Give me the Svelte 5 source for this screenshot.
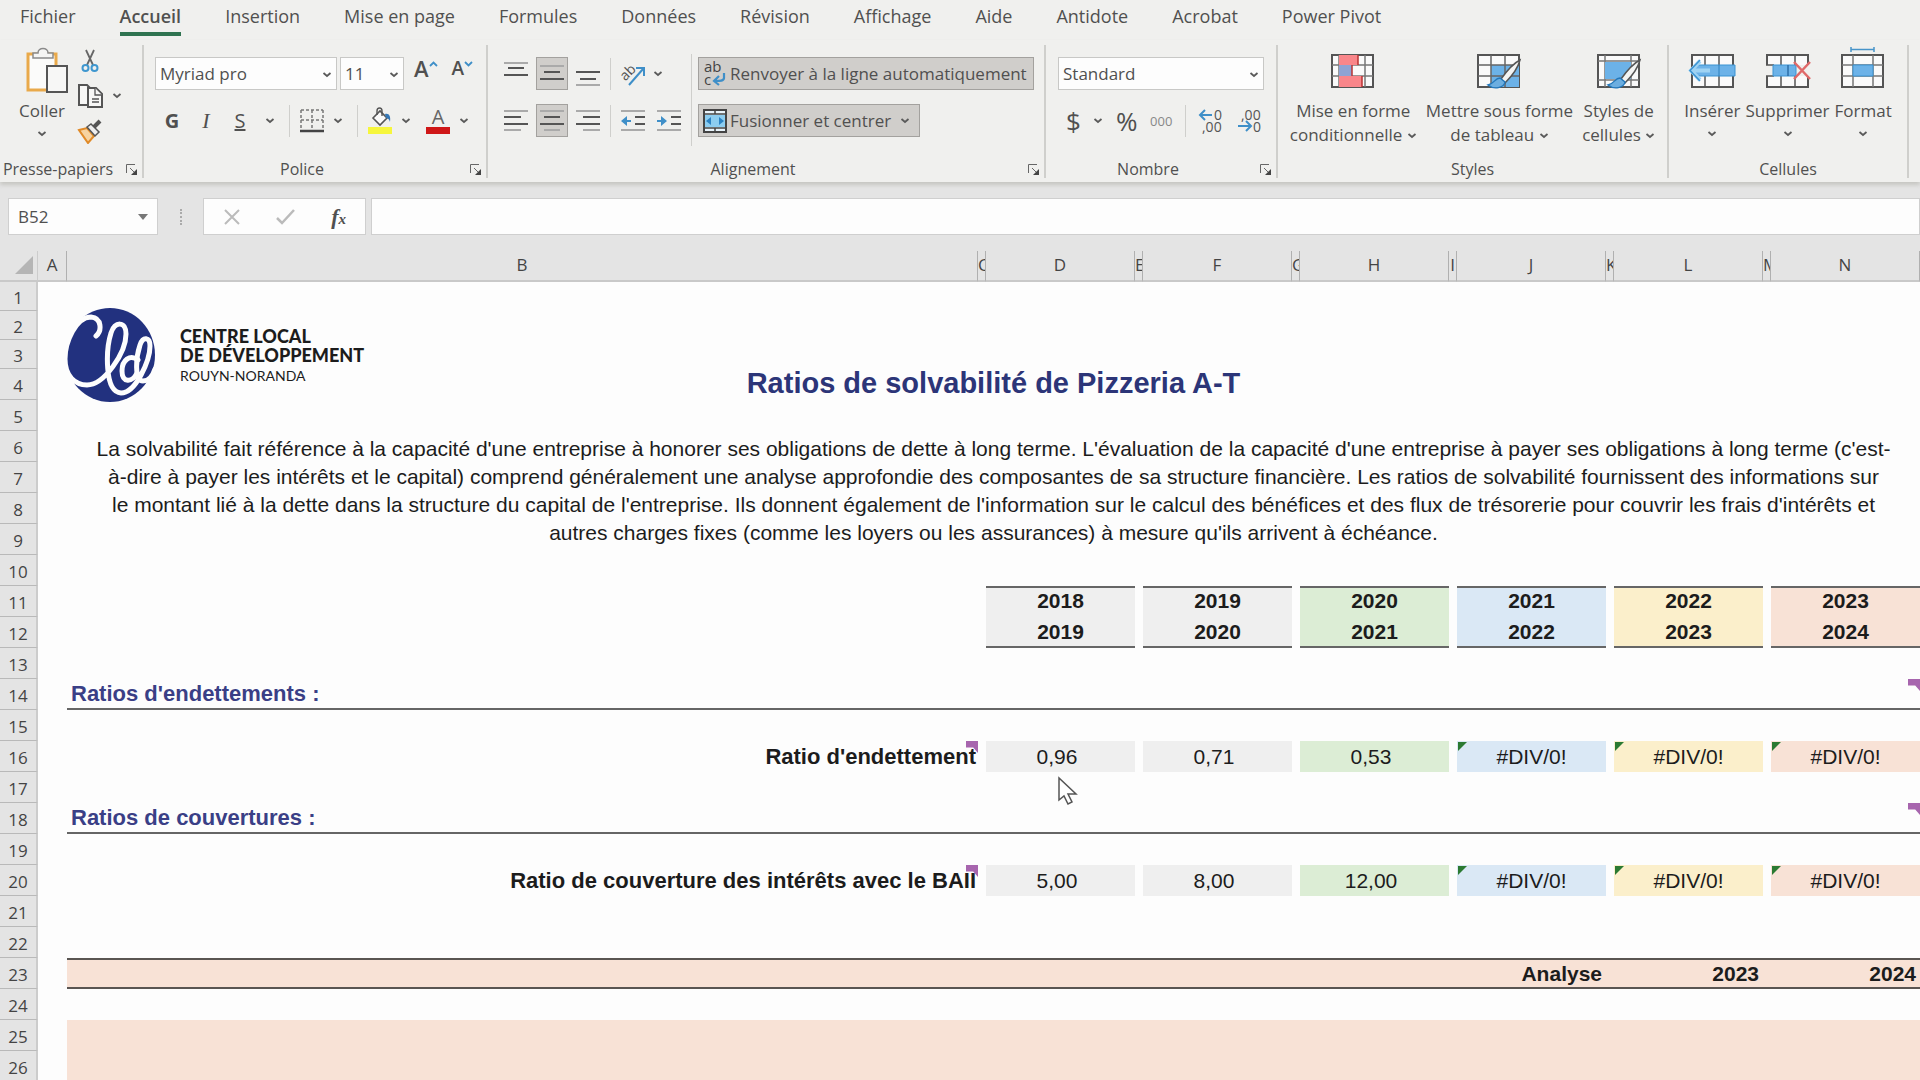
<script lang="ts">

    const tabs = ["Fichier", "Accueil", "Insertion", "Mise en page", "Formules", "Données", "Révision", "Affichage", "Aide", "Antidote", "Acrobat", "Power Pivot"];
    let activeTab = "Accueil";

    const letters = ["A", "B", "C", "D", "E", "F", "G", "H", "I", "J", "K", "L", "M", "N"];

    const years = [
        { from: 2018, to: 2019, tone: "grey", debt: "0,96", cover: "5,00" },
        { from: 2019, to: 2020, tone: "grey", debt: "0,71", cover: "8,00" },
        { from: 2020, to: 2021, tone: "green", debt: "0,53", cover: "12,00" },
        { from: 2021, to: 2022, tone: "blue", debt: "#DIV/0!", cover: "#DIV/0!" },
        { from: 2022, to: 2023, tone: "yellow", debt: "#DIV/0!", cover: "#DIV/0!" },
        { from: 2023, to: 2024, tone: "peach", debt: "#DIV/0!", cover: "#DIV/0!" },
    ];

    let cellName = "B52";
    let formula = "";
</script>

{#snippet chevron()}
    <svg class="chevron" width="10" height="6" viewBox="0 0 10 6"><path d="M1.500 1L5 4l3.500-3" fill="none" stroke="#5a5a5a" stroke-width="1.8"/></svg>
{/snippet}

{#snippet launcher(name)}
    <button class="launcher" aria-label={name}>
        <svg width="13" height="13" viewBox="0 0 13 13" fill="none" stroke="#666"><path d="M1.5 10V1.5H10M5 5l6 6"/><path d="M12 6v6H6z" fill="#444" stroke="none"/></svg>
    </button>
{/snippet}

{#snippet bars(lines)}
    <svg width="24" height="24" viewBox="0 0 24 24">
        {#each lines as l}
            <rect x={l[0]} y={l[1]} width={l[2]} height="2" fill={l[3] ? "#aaa" : "#555"}/>
        {/each}
    </svg>
{/snippet}

{#snippet brush()}
    <path d="M44 13c-6 3-14 12-19 19l4 4c6-6 13-15 15-23z" fill="#f4f4f3" stroke="#555" stroke-width="1.5"/>
    <path d="M24 31c-5 0-6 6-12 7 6 5 16 3 17-3z" fill="#6caee0" stroke="#2277bb" stroke-width="1.4"/>
{/snippet}

{#snippet ratioRow(num, label, key)}
    <tr>
        <th>{num}</th>
        <td></td>
        <td class="label noted">{label}</td>
        {#each years as y}
            <td></td>
            <td class="value {y.tone}" class:error={y[key].startsWith("#")}>{y[key]}</td>
        {/each}
    </tr>
{/snippet}

{#snippet emptyRow(num)}
    <tr><th>{num}</th><td colspan="14"></td></tr>
{/snippet}

<main>
    <nav class="tabs">
        {#each tabs as tab}
            <button class="tab" class:active={tab === activeTab} on:click={() => activeTab = tab}>{tab}</button>
        {/each}
    </nav>

    <div class="ribbon">
        <section class="group clipboard">
            <div class="body">
                <button class="big">
                    <svg width="44" height="48" viewBox="0 0 44 48">
                        <path d="M3 7h28v36H3z" fill="#fbfbfa" stroke="#e9a94a" stroke-width="3"/>
                        <path d="M8 11V6h5c0-6 10-6 10 0h5v5z" fill="#f5f5f4" stroke="#8a8a8a" stroke-width="1.5"/>
                        <path d="M22 19h20v26H22z" fill="#f7f7f6" stroke="#555" stroke-width="2"/>
                    </svg>
                    <span>Coller</span>
                    {@render chevron()}
                </button>
                <div class="stack">
                    <button aria-label="Couper">
                        <svg width="18" height="24" viewBox="0 0 18 24" fill="none"><path d="M5 1l7 15M13 1L6 16" stroke="#666" stroke-width="1.8"/><circle cx="4.5" cy="19" r="3" stroke="#3f97cf" stroke-width="2"/><circle cx="13.500" cy="19" r="3" stroke="#3f97cf" stroke-width="2"/></svg>
                    </button>
                    <button class="wide" aria-label="Copier">
                        <svg width="27" height="26" viewBox="0 0 27 26" fill="#f7f7f6" stroke="#555" stroke-width="2"><path d="M10 22H2V2h8l3 3"/><path d="M11 5h8l6 6v13H11z"/><path d="M18 5v7h7M15 16h7M15 19h7" stroke-width="1.300"/></svg>
                        {@render chevron()}
                    </button>
                    <button aria-label="Reproduire la mise en forme">
                        <svg width="26" height="25" viewBox="0 0 26 25"><path d="M2 11l8-2 7 8-6 7z" fill="#f7d3a0" stroke="#e08a28" stroke-width="2"/><path d="M10 8l4-3 8 8-4 4z" fill="#eee" stroke="#555" stroke-width="1.500"/><path d="M17 8l6-6" stroke="#555" stroke-width="4"/></svg>
                    </button>
                </div>
            </div>
            <footer class="launch">Presse-papiers {@render launcher("Presse-papiers")}</footer>
        </section>

        <section class="group font">
            <div class="body rows">
                <div class="line">
                    <div class="pick family"><select aria-label="Police"><option>Myriad pro</option></select>{@render chevron()}</div>
                    <div class="pick size"><select aria-label="Taille de police"><option>11</option></select>{@render chevron()}</div>
                    <button class="tool grow" aria-label="Augmenter la taille"><b class="letter">A</b><svg width="9" height="6" viewBox="0 0 9 6"><path d="M1 5l3.500-3.500L8 5" fill="none" stroke="#3f8fc8" stroke-width="1.800"/></svg></button>
                    <button class="tool shrink" aria-label="Réduire la taille"><b class="letter">A</b><svg width="9" height="6" viewBox="0 0 9 6"><path d="M1 1l3.500 3.500L8 1" fill="none" stroke="#3f8fc8" stroke-width="1.800"/></svg></button>
                </div>
                <div class="line font-tools">
                    <button class="tool glyph bold">G</button>
                    <button class="tool glyph italic">I</button>
                    <button class="tool glyph under">S</button>
                    <button class="drop" aria-label="Soulignement">{@render chevron()}</button>
                    <i class="bar"></i>
                    <button class="tool" aria-label="Bordures">
                        <svg width="26" height="26" viewBox="0 0 26 26" fill="none" stroke="#777" stroke-width="1.500"><path d="M2 2h22M2 2v20M24 2v20M13 2v20M2 12h22" stroke-dasharray="3 2"/><path d="M1 23h24" stroke="#444" stroke-width="2.500"/></svg>
                    </button>
                    <button class="drop" aria-label="Choix des bordures">{@render chevron()}</button>
                    <i class="bar"></i>
                    <button class="tool" aria-label="Couleur de remplissage">
                        <svg width="26" height="28" viewBox="0 0 26 28"><path d="M6 11l7-7 7 7-7 7z" fill="#fafafa" stroke="#555" stroke-width="1.600"/><path d="M10 8V4c0-4 5-4 5 0v5" fill="none" stroke="#555" stroke-width="1.400"/><path d="M18 7c4-1 6 2 5 8-1-3-2-4-4-4z" fill="#3577b5"/><path d="M1 20h24v7H1z" fill="#f6f63c"/></svg>
                    </button>
                    <button class="drop" aria-label="Choix du remplissage">{@render chevron()}</button>
                    <button class="tool" aria-label="Couleur de police">
                        <svg width="26" height="28" viewBox="0 0 26 28"><text x="13" y="17" text-anchor="middle" font-size="20" fill="#666">A</text><path d="M1 20h24v7H1z" fill="#cf1717"/></svg>
                    </button>
                    <button class="drop" aria-label="Choix de la couleur">{@render chevron()}</button>
                </div>
            </div>
            <footer class="launch">Police {@render launcher("Police")}</footer>
        </section>

        <section class="group align">
            <div class="body">
                <div class="rows">
                    <div class="line">
                        <button class="tool" aria-label="Aligner en haut">{@render bars([[0, 0, 24, 1], [4, 5, 16, 0], [0, 12, 24, 0]])}</button>
                        <button class="tool on" aria-label="Aligner au centre">{@render bars([[0, 3, 24, 1], [4, 9, 16, 0], [0, 16, 24, 0]])}</button>
                        <button class="tool" aria-label="Aligner en bas">{@render bars([[0, 9, 24, 0], [4, 16, 16, 0], [0, 22, 24, 1]])}</button>
                        <i class="bar"></i>
                        <button class="tool" aria-label="Orientation">
                            <svg width="26" height="26" viewBox="0 0 26 26"><text x="0" y="16" font-size="14" fill="#555" transform="rotate(-45 8 12)">ab</text><path d="M9 24L23 8M16 7h8v8" fill="none" stroke="#3f8fc8" stroke-width="2"/></svg>
                        </button>
                        <button class="drop" aria-label="Choix de l'orientation">{@render chevron()}</button>
                    </div>
                    <div class="line">
                        <button class="tool" aria-label="Aligner à gauche">{@render bars([[0, 1, 24, 1], [0, 7, 17, 0], [0, 14, 24, 0], [0, 20, 17, 1]])}</button>
                        <button class="tool on" aria-label="Centrer">{@render bars([[0, 1, 24, 1], [4, 7, 16, 0], [0, 14, 24, 0], [4, 20, 16, 1]])}</button>
                        <button class="tool" aria-label="Aligner à droite">{@render bars([[0, 1, 24, 1], [7, 7, 17, 0], [0, 14, 24, 0], [7, 20, 17, 1]])}</button>
                        <i class="bar"></i>
                        <button class="tool" aria-label="Diminuer le retrait">
                            <svg width="24" height="24" viewBox="0 0 24 24"><path d="M0 2h24M0 21h24" stroke="#aaa" stroke-width="2"/><path d="M14 8h10M14 15h10" stroke="#555" stroke-width="2"/><path d="M0 12l6-5v10zM6 11h4v2H6z" fill="#3f8fc8"/></svg>
                        </button>
                        <button class="tool indent" aria-label="Augmenter le retrait">
                            <svg width="24" height="24" viewBox="0 0 24 24"><path d="M0 2h24M0 21h24" stroke="#aaa" stroke-width="2"/><path d="M14 8h10M14 15h10" stroke="#555" stroke-width="2"/><path d="M10 12L4 7v10zM0 11h4v2H0z" fill="#3f8fc8"/></svg>
                        </button>
                    </div>
                </div>
                <i class="bar tall"></i>
                <div class="rows">
                    <button class="toggle wrap">
                        <svg width="24" height="28" viewBox="0 0 24 28"><text x="1" y="12" font-size="15" fill="#444">ab</text><text x="1" y="25" font-size="15" fill="#444">c</text><path d="M21 13v5c0 3-4 3-9 3M16 16l-5 5 5 4" fill="none" stroke="#3f8fc8" stroke-width="2.200"/></svg>
                        Renvoyer à la ligne automatiquement
                    </button>
                    <button class="toggle merge">
                        <svg width="24" height="24" viewBox="0 0 24 24"><path d="M1 1h22v22H1z" fill="#e9f4fb" stroke="#444" stroke-width="2"/><path d="M2 6h20v12H2z" fill="#8ccdf0"/><path d="M1 5h22M1 19h22M12 1v4M12 19v4" stroke="#444" stroke-width="1.500"/><path d="M3 12l5-4v8zM21 12l-5-4v8z" fill="#2b83c4"/></svg>
                        Fusionner et centrer
                        {@render chevron()}
                    </button>
                </div>
            </div>
            <footer class="launch">Alignement {@render launcher("Alignement")}</footer>
        </section>

        <section class="group number">
            <div class="body rows">
                <div class="pick format"><select aria-label="Format de nombre"><option>Standard</option></select>{@render chevron()}</div>
                <div class="line number-tools">
                    <button class="tool symbol">$</button>
                    <button class="drop" aria-label="Format monétaire">{@render chevron()}</button>
                    <button class="tool symbol">%</button>
                    <button class="tool zeros">000</button>
                    <i class="bar"></i>
                    <button class="tool" aria-label="Ajouter une décimale">
                        <svg width="26" height="26" viewBox="0 0 26 26" font-size="14" fill="#555"><text x="16" y="12">0</text><text x="4" y="24">,00</text><path d="M14 7H2M7 2L2 7l5 5" fill="none" stroke="#3f8fc8" stroke-width="2"/></svg>
                    </button>
                    <button class="tool" aria-label="Réduire les décimales">
                        <svg width="26" height="26" viewBox="0 0 26 26" font-size="14" fill="#555"><text x="4" y="12">,00</text><text x="16" y="24">0</text><path d="M1 18h13M9 13l5 5-5 5" fill="none" stroke="#3f8fc8" stroke-width="2"/></svg>
                    </button>
                </div>
            </div>
            <footer class="launch">Nombre {@render launcher("Nombre")}</footer>
        </section>

        <section class="group styles">
            <div class="body">
                <button class="big">
                    <svg width="46" height="48" viewBox="0 0 46 48"><path d="M2 8h41v32H2z" fill="#fafafa" stroke="#555" stroke-width="2"/><path d="M2 18h41M2 29h41M9 8v32M35 8v32" stroke="#777" stroke-width="1.500"/><path d="M9 8h19v10H9zM9 29h23v11H9z" fill="#f9868a"/><path d="M9 18h13v11H9z" fill="#8fa3d3"/><path d="M28 8v10M22 18v11M32 29v11" stroke="#b33" stroke-width="1.500"/></svg>
                    <span>Mise en forme<br>conditionnelle {@render chevron()}</span>
                </button>
                <button class="big">
                    <svg width="46" height="48" viewBox="0 0 46 48"><path d="M2 8h41v32H2z" fill="#fafafa" stroke="#555" stroke-width="2"/><path d="M15 18h28v22H15z" fill="#6cb2e8"/><path d="M2 18h41M2 29h41M15 8v32M29 8v32" stroke="#666" stroke-width="1.500"/>{@render brush()}</svg>
                    <span>Mettre sous forme<br>de tableau {@render chevron()}</span>
                </button>
                <button class="big">
                    <svg width="46" height="48" viewBox="0 0 46 48"><path d="M2 8h41v32H2z" fill="#fafafa" stroke="#555" stroke-width="2"/><path d="M2 14h41M2 33h41M9 8v32M35 8v32" stroke="#777" stroke-width="1.500"/><path d="M9 15h26v17H9z" fill="#6cb2e8"/>{@render brush()}</svg>
                    <span>Styles de<br>cellules {@render chevron()}</span>
                </button>
            </div>
            <footer>Styles</footer>
        </section>

        <section class="group cells">
            <div class="body">
                <button class="big">
                    <svg width="50" height="48" viewBox="0 0 50 48"><path d="M5 8h41v32H5z" fill="#fafafa" stroke="#555" stroke-width="2"/><path d="M18 8v32M32 8v32" stroke="#555" stroke-width="1.500"/><path d="M8 18h40v11H8z" fill="#6cb2e8" stroke="#3b93d2"/><path d="M32 18v11" stroke="#2d80be"/><path d="M13 14L4 23.500l9 9.500M4 23.500h19" fill="none" stroke="#9fd3f3" stroke-width="4"/><path d="M13 13L3 23.500l10 10.500" fill="none" stroke="#3b93d2" stroke-width="1.500"/></svg>
                    <span>Insérer</span>
                    {@render chevron()}
                </button>
                <button class="big">
                    <svg width="50" height="48" viewBox="0 0 50 48"><path d="M4 8h41v32H4z" fill="#fafafa" stroke="#555" stroke-width="2"/><path d="M18 8v32M32 8v32" stroke="#555" stroke-width="1.500"/><path d="M2 18h46v11H2z" fill="#f0f0ee"/><path d="M3 18h8M3 29h8" stroke="#555" stroke-width="1.500"/><path d="M10 18h23v11H10z" fill="#6cb2e8" stroke="#3b93d2"/><path d="M25 18v11" stroke="#2d6ea8" stroke-width="1.500"/><path d="M31 15l16 17M47 15L31 32" stroke="#e06a6a" stroke-width="2.500"/></svg>
                    <span>Supprimer</span>
                    {@render chevron()}
                </button>
                <button class="big">
                    <svg width="46" height="48" viewBox="0 0 46 48"><path d="M2 8h41v32H2z" fill="#fafafa" stroke="#555" stroke-width="2"/><path d="M2 18h41M2 29h41M13 8v32M33 8v32" stroke="#777" stroke-width="1.500"/><path d="M13 18h20v11H13z" fill="#6cb2e8" stroke="#3b93d2"/><path d="M11 0v5M34 0v5M11 2.500h23" stroke="#4794c9" stroke-width="1.500"/></svg>
                    <span>Format</span>
                    {@render chevron()}
                </button>
            </div>
            <footer>Cellules</footer>
        </section>
    </div>

    <div class="formula-bar">
        <div class="name-box">
            <input type="text" aria-label="Zone Nom" bind:value={cellName}>
            <svg width="10" height="6" viewBox="0 0 10 6"><path d="M0 0h10L5 6z" fill="#777"/></svg>
        </div>
        <span class="grip"></span>
        <div class="entry">
            <button aria-label="Annuler"><svg width="18" height="16" viewBox="0 0 18 16"><path d="M2 1l14 14M16 1L2 15" stroke="#bbb" stroke-width="2"/></svg></button>
            <button aria-label="Entrer"><svg width="20" height="16" viewBox="0 0 20 16"><path d="M1 9l5 5L18 1" fill="none" stroke="#bbb" stroke-width="2.500"/></svg></button>
            <button class="fx" aria-label="Insérer une fonction">f<small>x</small></button>
        </div>
        <input class="formula" type="text" aria-label="Barre de formule" bind:value={formula}>
    </div>

    <div class="sheet">
        <table>
            <colgroup>
                <col class="c-num"><col class="c-a"><col>
                {#each years as y}
                    <col class="c-gap"><col class="c-year">
                {/each}
            </colgroup>
            <thead>
                <tr>
                    <th class="corner"><svg width="18" height="18" viewBox="0 0 18 18"><path d="M18 0v18H0z" fill="#b5b5b5"/></svg></th>
                    {#each letters as letter}
                        <th>{letter}</th>
                    {/each}
                </tr>
            </thead>
            <tbody>
                <tr class="short"><th>1</th><td></td><td class="logo-cell" colspan="13">
                    <div class="logo">
                        <svg width="92" height="96" viewBox="-1 -1 92 96">
                            <ellipse cx="45" cy="47" rx="45" ry="47" fill="#22317f"/>
                            <g fill="none" stroke="#fdfdfd" stroke-linecap="round" stroke-linejoin="round" stroke-width="5">
                                <path d="M31 28C37 23 37 10 26 9 11 9 0 34 0 51c0 17 10 26 22 26 17 0 39-32 39-51 0-13-11-13-15-1-5 16-7 59 10 60 15 0 29-33 29-47 0-9-7-10-10-1-4 12-6 36 3 36 6 0 10-6 12-12"/>
                                <path d="M73 52c-8-6-16 0-16 11 0 12 10 12 15 2"/>
                            </g>
                        </svg>
                        <p><strong>CENTRE LOCAL<br>DE DÉVELOPPEMENT</strong><br><span>ROUYN-NORANDA</span></p>
                    </div>
                </td></tr>
                <tr class="short"><th>2</th><td colspan="14"></td></tr>
                <tr class="short"><th>3</th><td colspan="14"></td></tr>
                <tr><th>4</th><td></td><td class="title" colspan="13">Ratios de solvabilité de Pizzeria A-T</td></tr>
                {@render emptyRow(5)}
                <tr>
                    <th>6</th>
                    <td></td>
                    <td class="intro" colspan="13" rowspan="4">
                        La solvabilité fait référence à la capacité d'une entreprise à honorer ses obligations de dette à long terme. L'évaluation de la capacité d'une entreprise à payer ses obligations à long terme (c'est-<br>
                        à-dire à payer les intérêts et le capital) comprend généralement une analyse approfondie des composantes de sa structure financière. Les ratios de solvabilité fournissent des informations sur<br>
                        le montant lié à la dette dans la structure du capital de l'entreprise. Ils donnent également de l'information sur le calcul des bénéfices et des flux de trésorerie pour couvrir les frais d'intérêts et<br>
                        autres charges fixes (comme les loyers ou les assurances) à mesure qu'ils arrivent à échéance.
                    </td>
                </tr>
                <tr><th>7</th><td></td></tr>
                <tr><th>8</th><td></td></tr>
                <tr><th>9</th><td></td></tr>
                {@render emptyRow(10)}
                <tr>
                    <th>11</th><td></td><td></td>
                    {#each years as y}
                        <td></td><td class="year first {y.tone}">{y.from}</td>
                    {/each}
                </tr>
                <tr>
                    <th>12</th><td></td><td></td>
                    {#each years as y}
                        <td></td><td class="year last {y.tone}">{y.to}</td>
                    {/each}
                </tr>
                {@render emptyRow(13)}
                <tr><th>14</th><td></td><td class="section noted" colspan="13">Ratios d'endettements :</td></tr>
                {@render emptyRow(15)}
                {@render ratioRow(16, "Ratio d'endettement", "debt")}
                <tr>
                    <th>17</th><td colspan="3"></td>
                    <td class="pointed">
                        <svg class="cursor" width="22" height="30" viewBox="0 0 22 30"><path d="M2 2v22l5-4 4 8 4-2-4-8h8z" fill="#fff" stroke="#555" stroke-width="1.500"/></svg>
                    </td>
                    <td colspan="10"></td>
                </tr>
                <tr><th>18</th><td></td><td class="section noted" colspan="13">Ratios de couvertures :</td></tr>
                {@render emptyRow(19)}
                {@render ratioRow(20, "Ratio de couverture des intérêts avec le BAII", "cover")}
                {@render emptyRow(21)}
                {@render emptyRow(22)}
                <tr class="analysis">
                    <th>23</th><td></td>
                    <td colspan="9">Analyse</td>
                    <td colspan="2">2023</td>
                    <td colspan="2">2024</td>
                </tr>
                {@render emptyRow(24)}
                <tr><th>25</th><td></td><td class="peach" colspan="13"></td></tr>
                <tr><th>26</th><td></td><td class="peach" colspan="13"></td></tr>
            </tbody>
        </table>
    </div>
</main>

<style>
    :global(body) {
        margin: 0;
        background: #fdfdfd;
    }

    * { box-sizing: border-box; }

    main {
        display: flex;
        flex-direction: column;
        height: 100vh;
        overflow: hidden;
        background-color: #e4e4e4;
        font-family: "Open Sans", "Noto Sans", sans-serif;
        font-size: 17px;
        color: #505050;
    }

    button, input, select {
        font: inherit;
        color: inherit;
        border: none;
        background: none;
        padding: 0;
        margin: 0;
    }

    svg { display: block; flex: none; }

    .tabs {
        display: flex;
        gap: 44px;
        height: 40px;
        padding: 0 20px;
        background-color: #f0f0ee;
        font-size: 18px;
    }

    .tab {
        height: 36px;
        line-height: 32px;
        border-bottom: 4px solid transparent;
        white-space: nowrap;
    }

    .tab.active {
        font-weight: 600;
        border-color: #2f7350;
    }

    .ribbon {
        display: flex;
        flex: none;
        height: 142px;
        padding: 5px 0 4px;
        background-color: #f0f0ee;
        box-shadow: 0 3px 4px #c6c6c2;
    }

    .group {
        display: flex;
        flex-direction: column;
        justify-content: space-between;
        border-right: 2px solid #cfcfcc;
    }

    .clipboard { width: 144px; }
    .font { width: 344px; }
    .align { width: 558px; }
    .number { width: 232px; }
    .styles { width: 391px; }
    .cells { width: 240px; }

    .body {
        display: flex;
        height: 108px;
    }

    .rows {
        display: flex;
        flex-direction: column;
        gap: 14px;
        padding-top: 12px;
    }

    .line {
        display: flex;
        align-items: center;
        height: 33px;
    }

    footer {
        position: relative;
        height: 22px;
        line-height: 26px;
        text-align: center;
        font-size: 16px;
        white-space: nowrap;
    }

    .launch { padding-right: 26px; }

    .launcher {
        position: absolute;
        right: 4px;
        bottom: 2px;
    }

    .big {
        display: flex;
        flex-direction: column;
        align-items: center;
        line-height: 24px;
        white-space: nowrap;
    }

    .big > svg:first-child { margin: 2px 0 4px; }
    .big > .chevron { margin-top: 8px; }
    .big span .chevron { display: inline-block; vertical-align: middle; }

    .clipboard .big {
        width: 72px;
        padding-left: 12px;
    }

    .clipboard .big > svg:first-child { margin-left: 10px; }

    .stack {
        display: flex;
        flex-direction: column;
        align-items: flex-start;
        gap: 10px;
        padding: 4px 0 0 5px;
    }

    .stack button:first-child { margin-left: 4px; }

    .wide {
        display: flex;
        align-items: center;
        gap: 8px;
    }

    .pick {
        position: relative;
        height: 33px;
        background-color: #fdfdfd;
        border: 1px solid #c8c8c6;
    }

    .pick select {
        width: 100%;
        height: 100%;
        padding-left: 4px;
        appearance: none;
    }

    .pick .chevron {
        position: absolute;
        right: 4px;
        top: 14px;
        pointer-events: none;
    }

    .font .rows { padding-left: 11px; }
    .family { width: 182px; }
    .size { width: 64px; margin-left: 3px; }

    .tool {
        display: flex;
        align-items: center;
        justify-content: center;
        height: 33px;
    }

    .letter { font-weight: 600; line-height: 22px; }
    .grow { align-items: flex-start; margin-left: 10px; }
    .grow .letter { font-size: 22px; }
    .shrink { align-items: flex-start; margin-left: 14px; }
    .shrink .letter { font-size: 19px; }
    .grow svg, .shrink svg { margin-top: 4px; }

    .font-tools .drop { margin: 0 14px 0 8px; }
    .font-tools .bar { margin-right: 9px; }
    .glyph { width: 34px; font-size: 20px; }
    .bold { font-weight: 700; }
    .italic { font-family: "Liberation Serif", serif; font-size: 22px; font-style: italic; }
    .under { text-decoration: underline; }

    .bar {
        width: 1px;
        height: 32px;
        background-color: #cfcfcc;
    }

    .bar.tall {
        height: 92px;
        margin-top: 9px;
        margin-right: 6px;
    }

    .align .body { padding-left: 16px; }
    .align .body > .rows:first-child { width: 187px; }
    .align .line { gap: 8px; }
    .align .line .tool { width: 24px; }
    .align .line .tool.on { width: 32px; }
    .align .line .bar { margin: 0 2px; }
    .align .line .indent { margin-left: 4px; }

    .on, .toggle {
        background-color: #d0cecb;
        border: 1px solid #a3a19e;
    }

    .toggle {
        display: flex;
        align-items: center;
        height: 33px;
        gap: 3px;
        padding: 0 9px 0 4px;
        white-space: nowrap;
    }

    .wrap { width: 336px; }
    .merge { width: 222px; }
    .merge .chevron { margin-left: auto; }

    .number .rows { padding-left: 12px; }
    .format { width: 206px; }
    .number-tools { justify-content: space-between; padding: 0 13px 0 8px; }
    .symbol { font-size: 26px; }
    .zeros { font-size: 13px; color: #888; }

    .styles .body { justify-content: center; gap: 9px; }
    .cells .body { justify-content: center; gap: 5px; }

    .formula-bar {
        display: flex;
        flex: none;
        align-items: center;
        height: 37px;
        margin: 16px 0 16px 8px;
    }

    .name-box, .entry, .formula {
        height: 37px;
        background-color: #fdfdfd;
        border: 1px solid #cfcfcf;
    }

    .name-box {
        display: flex;
        align-items: center;
        width: 150px;
        padding: 0 9px;
    }

    .name-box input { width: 120px; }

    .grip {
        height: 16px;
        margin: 0 21px 0 22px;
        border-left: 2px dotted #aaa;
    }

    .entry {
        display: flex;
        align-items: center;
        justify-content: space-between;
        width: 163px;
        padding: 0 19px;
    }

    .fx {
        font-family: "Liberation Serif", serif;
        font-size: 22px;
        font-style: italic;
        font-weight: 700;
    }

    .fx small { font-size: 15px; }

    .formula {
        flex: 1;
        margin-left: 5px;
        padding: 0 8px;
    }

    .sheet {
        flex: 1;
        min-height: 0;
        overflow: hidden;
        background-color: #fdfdfd;
    }

    table {
        width: 100%;
        table-layout: fixed;
        border-collapse: separate;
        border-spacing: 0;
        font-size: 21px;
        line-height: 24px;
        color: #1c1c1c;
        font-family: "Liberation Sans", Arial, sans-serif;
    }

    .c-num { width: 38px; }
    .c-a { width: 29px; }
    .c-gap { width: 8px; }
    .c-year { width: 149px; }

    td, th {
        height: 31px;
        padding: 0;
    }

    .short td, .short th { height: 29px; }

    th {
        padding-top: 4px;
        font-family: "Open Sans", "Noto Sans", sans-serif;
        font-size: 17px;
        font-weight: 400;
        color: #444;
        background-color: #e4e4e4;
        border-right: 2px solid #cccccc;
        border-bottom: 1px solid #b9b9b9;
    }

    thead th {
        height: 31px;
        padding: 0 0 2px;
        overflow: hidden;
        border-right: 1px solid #b0b0b0;
        border-bottom: 2px solid #c9c9c9;
    }

    thead .corner {
        padding-left: 15px;
        border-right-color: #cccccc;
    }

    .logo-cell { position: relative; }

    .logo {
        position: absolute;
        left: -3px;
        top: 25px;
        display: flex;
        gap: 24px;
    }

    .logo p {
        margin: 20px 0 0;
        font-family: Lato, sans-serif;
        font-size: 18px;
        line-height: 19px;
        color: #1c1c1c;
        white-space: nowrap;
    }

    .logo strong { font-weight: 900; }
    .logo span { font-size: 14px; }

    .title {
        padding-bottom: 4px;
        font-size: 29px;
        font-weight: 700;
        text-align: center;
        color: #2c3578;
    }

    .intro {
        padding-bottom: 4px;
        font-size: 21px;
        line-height: 28px;
        text-align: center;
        white-space: nowrap;
    }

    .year {
        font-weight: 700;
        text-align: center;
    }

    .first { padding-bottom: 4px; border-top: 2px solid #666; }
    .last { border-bottom: 2px solid #666; }

    .grey { background-color: #efefef; }
    .green { background-color: #dcedd5; }
    .blue { background-color: #dae8f5; }
    .yellow { background-color: #fbefcb; }
    .peach { background-color: #f8e2d6; }

    .section {
        padding-left: 4px;
        font-size: 22px;
        font-weight: 700;
        color: #3a3f86;
        border-bottom: 2px solid #666;
    }

    .label {
        padding-right: 2px;
        font-size: 22px;
        font-weight: 700;
        text-align: right;
    }

    .value {
        padding-right: 7px;
        text-align: center;
    }

    .error { padding-right: 0; }

    .noted, .error, .pointed { position: relative; }

    .noted::after {
        content: "";
        position: absolute;
        top: 0;
        right: 0;
        width: 12px;
        height: 12px;
        background-color: #a765ae;
        clip-path: polygon(0 0, 100% 0, 100% 100%, 60% 55%, 0 55%);
    }

    .error::before {
        content: "";
        position: absolute;
        top: 1px;
        left: 1px;
        border-top: 9px solid #2b7a32;
        border-right: 9px solid transparent;
    }

    .cursor {
        position: absolute;
        left: 71px;
        top: 4px;
    }

    .analysis td {
        padding-right: 4px;
        font-weight: 700;
        text-align: right;
    }

    .analysis td:nth-child(n+3) {
        background-color: #f8e2d6;
        border-top: 2px solid #5a5552;
        border-bottom: 2px solid #5a5552;
    }
</style>
